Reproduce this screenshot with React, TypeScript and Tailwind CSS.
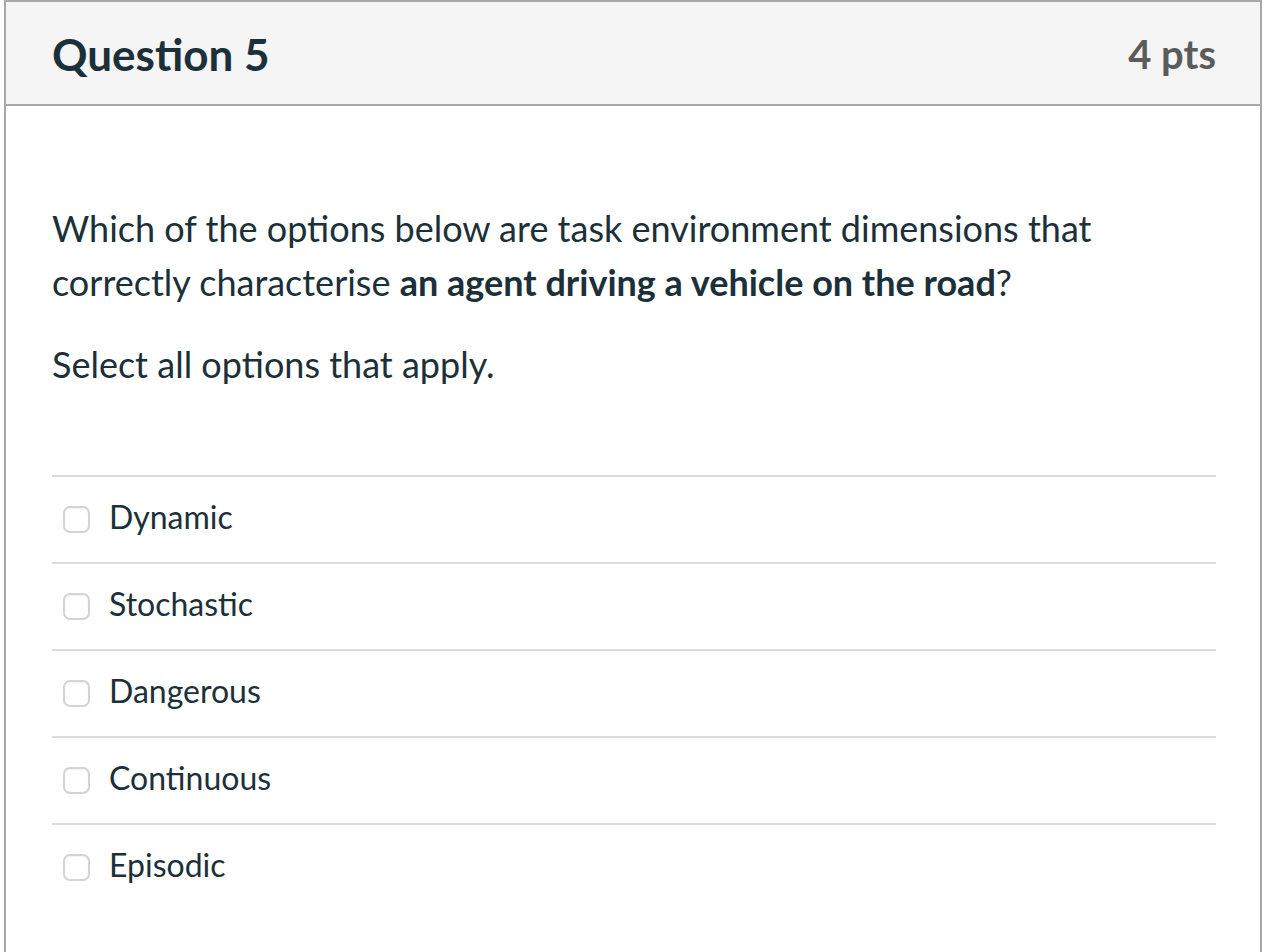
import React from "react";

const options = ["Dynamic", "Stochastic", "Dangerous", "Continuous", "Episodic"];

export default function App() {
  return (
    <div className="w-[1264px] h-[952px] bg-white overflow-hidden" style={{ fontFamily: "Lato, 'Open Sans', sans-serif" }}>
      <div className="ml-[4px] mr-[2px] h-[960px] border-t-2 border-l-2 border-r-2 border-[#a8a8a8] flex flex-col">
        <div className="h-[104px] bg-[#f5f5f5] border-b-2 border-[#a8a8a8] flex items-center justify-between pl-[46px] pr-[44px]">
          <div className="text-[44px] font-bold text-[#1b3038] leading-none mt-[2px]">Question 5</div>
          <div className="text-[40px] font-bold text-[#5b5b5b] leading-none mt-[2px]">4 pts</div>
        </div>
        <div className="pl-[46px] pr-[44px] pt-[95px] text-[#1b3038]">
          <p className="text-[36px] leading-[54px]">
            Which of the options below are task environment dimensions that correctly characterise{" "}
            <strong className="font-bold">an agent driving a vehicle on the road</strong>?
          </p>
          <p className="text-[36px] leading-[54px] mt-[28px]">Select all options that apply.</p>
          <div className="mt-[84px]">
            {options.map((o) => (
              <div key={o} className="border-t-2 border-[#dcdcdc] h-[87px] flex items-center">
                <span className="ml-[11px] w-[27px] h-[27px] rounded-[7px] border-2 border-[#d4d4d4] bg-white shadow-[inset_0_1px_2px_rgba(0,0,0,0.06)] shrink-0" />
                <span className="ml-[19px] text-[32px] leading-none mb-[5px]">{o}</span>
              </div>
            ))}
          </div>
        </div>
      </div>
    </div>
  );
}
